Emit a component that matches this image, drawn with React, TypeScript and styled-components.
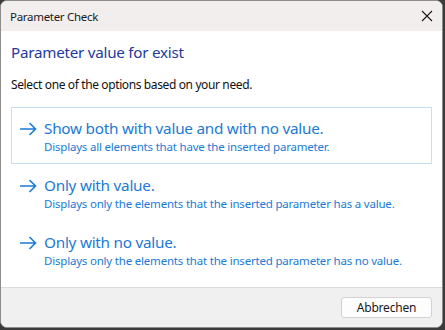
import React from "react";
import styled, { createGlobalStyle } from "styled-components";

const Global = createGlobalStyle`
  html, body { margin: 0; padding: 0; }
  body {
    width: 445px; height: 330px; overflow: hidden;
    background: #3b3b3b;
    font-family: "Noto Sans", "Open Sans", sans-serif;
  }
`;

const Window = styled.div`
  width: 443px;
  height: 328px;
  box-sizing: border-box;
  border: 1px solid #8c8c8c;
  border-radius: 7px;
  overflow: hidden;
  display: flex;
  flex-direction: column;
  background: #ffffff;
`;

const TitleBar = styled.div`
  height: 30px;
  flex: none;
  background: #f3eeee;
  display: flex;
  align-items: center;
  justify-content: space-between;
  padding: 0 0 0 9px;
`;

const TitleText = styled.span`
  font-size: 11.5px;
  color: #1a1a1a;
  letter-spacing: -0.3px;
`;

const CloseButton = styled.div`
  width: 46px;
  height: 30px;
  display: flex;
  align-items: center;
  justify-content: center;
  margin-right: -8px;
`;

const Content = styled.div`
  flex: 1;
  background: #ffffff;
  padding: 11px 10px 0 10px;
  display: flex;
  flex-direction: column;
`;

const Heading = styled.div`
  font-size: 15.2px;
  line-height: 21px;
  color: #1e3a9e;
  letter-spacing: -0.25px;
`;

const Intro = styled.div`
  margin-top: 14px;
  font-size: 12px;
  line-height: 16px;
  color: #111;
  letter-spacing: -0.38px;
`;

const OptionList = styled.div`
  margin-top: 14px;
  display: flex;
  flex-direction: column;
`;

const Option = styled.div<{ $active?: boolean }>`
  height: 57px;
  box-sizing: border-box;
  border: 1px solid ${(p) => (p.$active ? "#c6def2" : "transparent")};
  padding: 10px 0 0 7px;
  display: flex;
  align-items: flex-start;
  gap: 7px;
`;

const ArrowWrap = styled.div`
  width: 18px;
  height: 21px;
  display: flex;
  align-items: center;
  flex: none;
`;

const OptionText = styled.div`
  display: flex;
  flex-direction: column;
`;

const OptionTitle = styled.div`
  font-size: 15.3px;
  line-height: 21px;
  color: #1b7ad6;
  letter-spacing: -0.25px;
`;

const OptionSub = styled.div`
  font-size: 11.5px;
  line-height: 16px;
  color: #1b7ad6;
  letter-spacing: -0.2px;
`;

const Footer = styled.div`
  height: 40px;
  flex: none;
  box-sizing: border-box;
  border-top: 1px solid #dcdcdc;
  background: #f0f0f0;
  display: flex;
  align-items: center;
  justify-content: flex-end;
  padding: 0 10px 0 0;
`;

const Button = styled.button`
  width: 91px;
  height: 21px;
  box-sizing: border-box;
  background: #fdfdfd;
  border: 1px solid #d2d2d2;
  border-radius: 3px;
  font-family: inherit;
  font-size: 12px;
  color: #1a1a1a;
  padding: 0;
  letter-spacing: -0.2px;
`;

const Arrow = () => (
  <svg width="18" height="14" viewBox="0 0 18 14">
    <path d="M1 7 H16.5 M10.5 1 L16.5 7 L10.5 13" fill="none" stroke="#1b7ad6" strokeWidth="1.6" />
  </svg>
);

const options = [
  { t: "Show both with value and with no value.", s: "Displays all elements that have the inserted parameter.", active: true },
  { t: "Only with value.", s: "Displays only the elements that the inserted parameter has a value." },
  { t: "Only with no value.", s: "Displays only the elements that the inserted parameter has no value." },
];

export default function App() {
  return (
    <>
      <Global />
      <Window>
        <TitleBar>
          <TitleText>Parameter Check</TitleText>
          <CloseButton>
            <svg width="12" height="12" viewBox="0 0 12 12">
              <path d="M1 1 L11 11 M11 1 L1 11" stroke="#1a1a1a" strokeWidth="1.1" />
            </svg>
          </CloseButton>
        </TitleBar>
        <Content>
          <Heading>Parameter value for exist</Heading>
          <Intro>Select one of the options based on your need.</Intro>
          <OptionList>
            {options.map((o) => (
              <Option key={o.t} $active={o.active}>
                <ArrowWrap>
                  <Arrow />
                </ArrowWrap>
                <OptionText>
                  <OptionTitle>{o.t}</OptionTitle>
                  <OptionSub>{o.s}</OptionSub>
                </OptionText>
              </Option>
            ))}
          </OptionList>
        </Content>
        <Footer>
          <Button>Abbrechen</Button>
        </Footer>
      </Window>
    </>
  );
}
